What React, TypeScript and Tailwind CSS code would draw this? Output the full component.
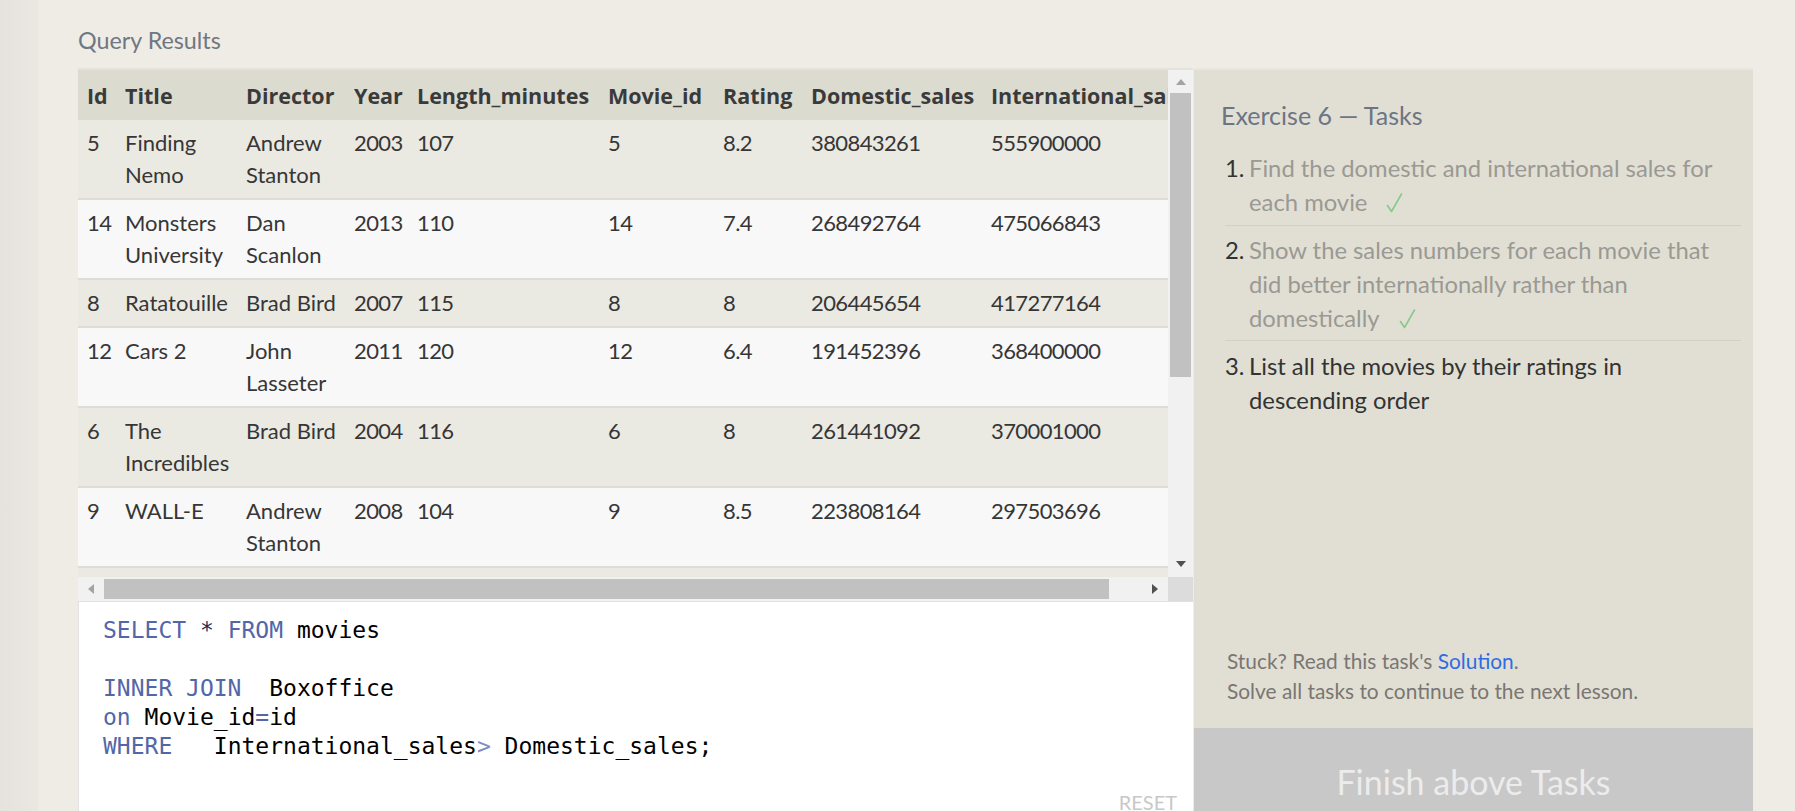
import React from "react";

type Row = {
  id: string;
  title: string[];
  director: string[];
  year: string;
  len: string;
  mid: string;
  rating: string;
  dom: string;
  intl: string;
};

const rows: Row[] = [
  { id: "5", title: ["Finding", "Nemo"], director: ["Andrew", "Stanton"], year: "2003", len: "107", mid: "5", rating: "8.2", dom: "380843261", intl: "555900000" },
  { id: "14", title: ["Monsters", "University"], director: ["Dan", "Scanlon"], year: "2013", len: "110", mid: "14", rating: "7.4", dom: "268492764", intl: "475066843" },
  { id: "8", title: ["Ratatouille"], director: ["Brad Bird"], year: "2007", len: "115", mid: "8", rating: "8", dom: "206445654", intl: "417277164" },
  { id: "12", title: ["Cars 2"], director: ["John", "Lasseter"], year: "2011", len: "120", mid: "12", rating: "6.4", dom: "191452396", intl: "368400000" },
  { id: "6", title: ["The", "Incredibles"], director: ["Brad Bird"], year: "2004", len: "116", mid: "6", rating: "8", dom: "261441092", intl: "370001000" },
  { id: "9", title: ["WALL-E"], director: ["Andrew", "Stanton"], year: "2008", len: "104", mid: "9", rating: "8.5", dom: "223808164", intl: "297503696" },
];

const cols = "grid grid-cols-[38px_121px_108px_63px_191px_115px_88px_180px_240px]";

function Cell({ lines, num }: { lines: string[]; num?: boolean }) {
  return (
    <div className={num ? "pl-[9px] tracking-[-0.6px]" : "pl-[9px]"}>
      {lines.map((l, i) => (
        <div key={i} className="whitespace-nowrap">
          {l}
        </div>
      ))}
    </div>
  );
}

function Check() {
  return (
    <svg className="inline-block ml-[19px] align-[-2px]" width="17" height="20" viewBox="0 0 17 20" fill="none">
      <path d="M1.5 12.5 L5.5 18.5 L15.5 1" stroke="#86c98a" strokeWidth="1.6" strokeLinecap="round" strokeLinejoin="round" />
    </svg>
  );
}

export default function App() {
  const headers = ["Id", "Title", "Director", "Year", "Length_minutes", "Movie_id", "Rating", "Domestic_sales", "International_sales"];
  return (
    <div className="w-[1795px] h-[811px] overflow-hidden bg-[#efece5] flex font-[Lato,sans-serif]">
      <div className="w-[38px] shrink-0 bg-linear-to-r from-[#e6e3df] via-[#e8e5e1] to-[#ebe8e2]" />
      <div className="flex flex-col pl-[40px]">
        <div className="shrink-0 pt-[24px] h-[68px] text-[23.3px] leading-[32px] text-[#6f7782]">Query Results</div>
        <div className="shrink-0 flex h-[768px]">
          {/* Left column */}
          <div className="w-[1115px] flex flex-col">
            <div className="shrink-0 flex border-t-2 border-[#e4e3da]">
              <div className="w-[1090px] h-[507px] overflow-hidden bg-[#f8f8f8] text-[22px] leading-[32px] text-[#363636]">
                <div className={`${cols} h-[50px] items-center pt-[1px] bg-[#dcdbd0] font-bold font-['Open_Sans',sans-serif] text-[21.5px] text-[#3a3a3a]`}>
                  {headers.map((h) => (
                    <div key={h} className="pl-[9px] whitespace-nowrap">
                      {h}
                    </div>
                  ))}
                </div>
                {rows.map((r, i) => (
                  <div
                    key={r.id}
                    className={`${cols} pt-[7px] pb-[7px] border-b-2 border-[#dedcd7] ${i % 2 === 0 ? "bg-[#eae9e2]" : "bg-[#f8f8f8]"}`}
                  >
                    <Cell lines={[r.id]} num />
                    <Cell lines={r.title} />
                    <Cell lines={r.director} />
                    <Cell lines={[r.year]} num />
                    <Cell lines={[r.len]} num />
                    <Cell lines={[r.mid]} num />
                    <Cell lines={[r.rating]} num />
                    <Cell lines={[r.dom]} num />
                    <Cell lines={[r.intl]} num />
                  </div>
                ))}
                <div className="h-[48px] bg-[#eae9e2]" />
              </div>
              {/* vertical scrollbar */}
              <div className="w-[25px] h-[507px] bg-[#f1f1f1] flex flex-col items-center">
                <div className="h-[23px] flex items-center justify-center">
                  <div className="w-0 h-0 border-l-[5px] border-r-[5px] border-b-[6px] border-l-transparent border-r-transparent border-b-[#a3a3a3]" />
                </div>
                <div className="w-[21px] h-[284px] bg-[#c1c1c1]" />
                <div className="flex-1" />
                <div className="h-[26px] flex items-center justify-center">
                  <div className="w-0 h-0 border-l-[5px] border-r-[5px] border-t-[6px] border-l-transparent border-r-transparent border-t-[#505050]" />
                </div>
              </div>
            </div>
            {/* horizontal scrollbar */}
            <div className="shrink-0 flex h-[24px]">
              <div className="w-[1090px] bg-[#f1f1f1] flex items-center">
                <div className="w-[26px] flex items-center justify-center">
                  <div className="w-0 h-0 border-t-[5px] border-b-[5px] border-r-[6px] border-t-transparent border-b-transparent border-r-[#a3a3a3]" />
                </div>
                <div className="w-[1005px] h-[20px] bg-[#c1c1c1]" />
                <div className="flex-1 flex items-center justify-end pr-[10px]">
                  <div className="w-0 h-0 border-t-[5px] border-b-[5px] border-l-[6px] border-t-transparent border-b-transparent border-l-[#505050]" />
                </div>
              </div>
              <div className="w-[25px] bg-[#dcdcdc]" />
            </div>
            {/* editor */}
            <div className="flex-1 bg-white border-t border-l border-[#e2e2e2] flex flex-col">
              <div className="pt-[14px] pl-[24px] font-['DejaVu_Sans_Mono',monospace] text-[23px] leading-[29px] text-black whitespace-pre">
                <div>
                  <span className="text-[#5266a8]">SELECT</span> <span className="text-[#2a2a50]">*</span> <span className="text-[#5266a8]">FROM</span> movies
                </div>
                <div>&nbsp;</div>
                <div>
                  <span className="text-[#5266a8]">INNER JOIN</span>{"  "}Boxoffice
                </div>
                <div>
                  <span className="text-[#5266a8]">on</span> Movie_id<span className="text-[#5266a8]">=</span>id
                </div>
                <div>
                  <span className="text-[#5266a8]">WHERE</span>{"   "}International_sales<span className="text-[#7d8fc4]">&gt;</span> Domestic_sales;
                </div>
              </div>
              <div className="flex-1" />
              <div className="flex justify-end pr-[16px] pb-[22px] text-[20px] leading-[24px] text-[#c8c8c8]">RESET</div>
            </div>
          </div>
          {/* Right panel */}
          <div className="w-[559px] ml-[1px] bg-[#e1dfd4] border-t-2 border-[#e8e7de] flex flex-col">
            <div className="pt-[29px] pl-[27px] text-[25px] leading-[32px] text-[#6b7584]">Exercise 6 — Tasks</div>
            <div className="pt-[20px] pl-[31px] pr-[12px] text-[23.8px] leading-[34px]">
              <div className="flex pb-[6px] border-b border-[#d2d0c5] text-[#9a9993]">
                <div className="w-[24px] shrink-0 text-[#333333]">1.</div>
                <div className="flex-1">
                  <div className="whitespace-nowrap">Find the domestic and international sales for</div>
                  <div className="whitespace-nowrap">
                    each movie
                    <Check />
                  </div>
                </div>
              </div>
              <div className="flex mt-[7px] pb-[5px] border-b border-[#d2d0c5] text-[#9a9993]">
                <div className="w-[24px] shrink-0 text-[#333333]">2.</div>
                <div className="flex-1">
                  <div className="whitespace-nowrap">Show the sales numbers for each movie that</div>
                  <div className="whitespace-nowrap">did better internationally rather than</div>
                  <div className="whitespace-nowrap">
                    domestically
                    <Check />
                  </div>
                </div>
              </div>
              <div className="flex mt-[8px] text-[#333333]">
                <div className="w-[24px] shrink-0">3.</div>
                <div className="flex-1">
                  <div className="whitespace-nowrap">List all the movies by their ratings in</div>
                  <div className="whitespace-nowrap">descending order</div>
                </div>
              </div>
            </div>
            <div className="flex-1" />
            <div className="pl-[33px] pb-[22px] text-[20.9px] leading-[30px] text-[#7a7672]">
              <div>
                Stuck? Read this task's <span className="text-[#2f6be3]">Solution</span>.
              </div>
              <div>Solve all tasks to continue to the next lesson.</div>
            </div>
            <div className="h-[108px] bg-[#c8c8c8] flex items-center justify-center text-[34px] leading-[44px] text-[#ececec]">
              Finish above Tasks
            </div>
          </div>
        </div>
      </div>
    </div>
  );
}
